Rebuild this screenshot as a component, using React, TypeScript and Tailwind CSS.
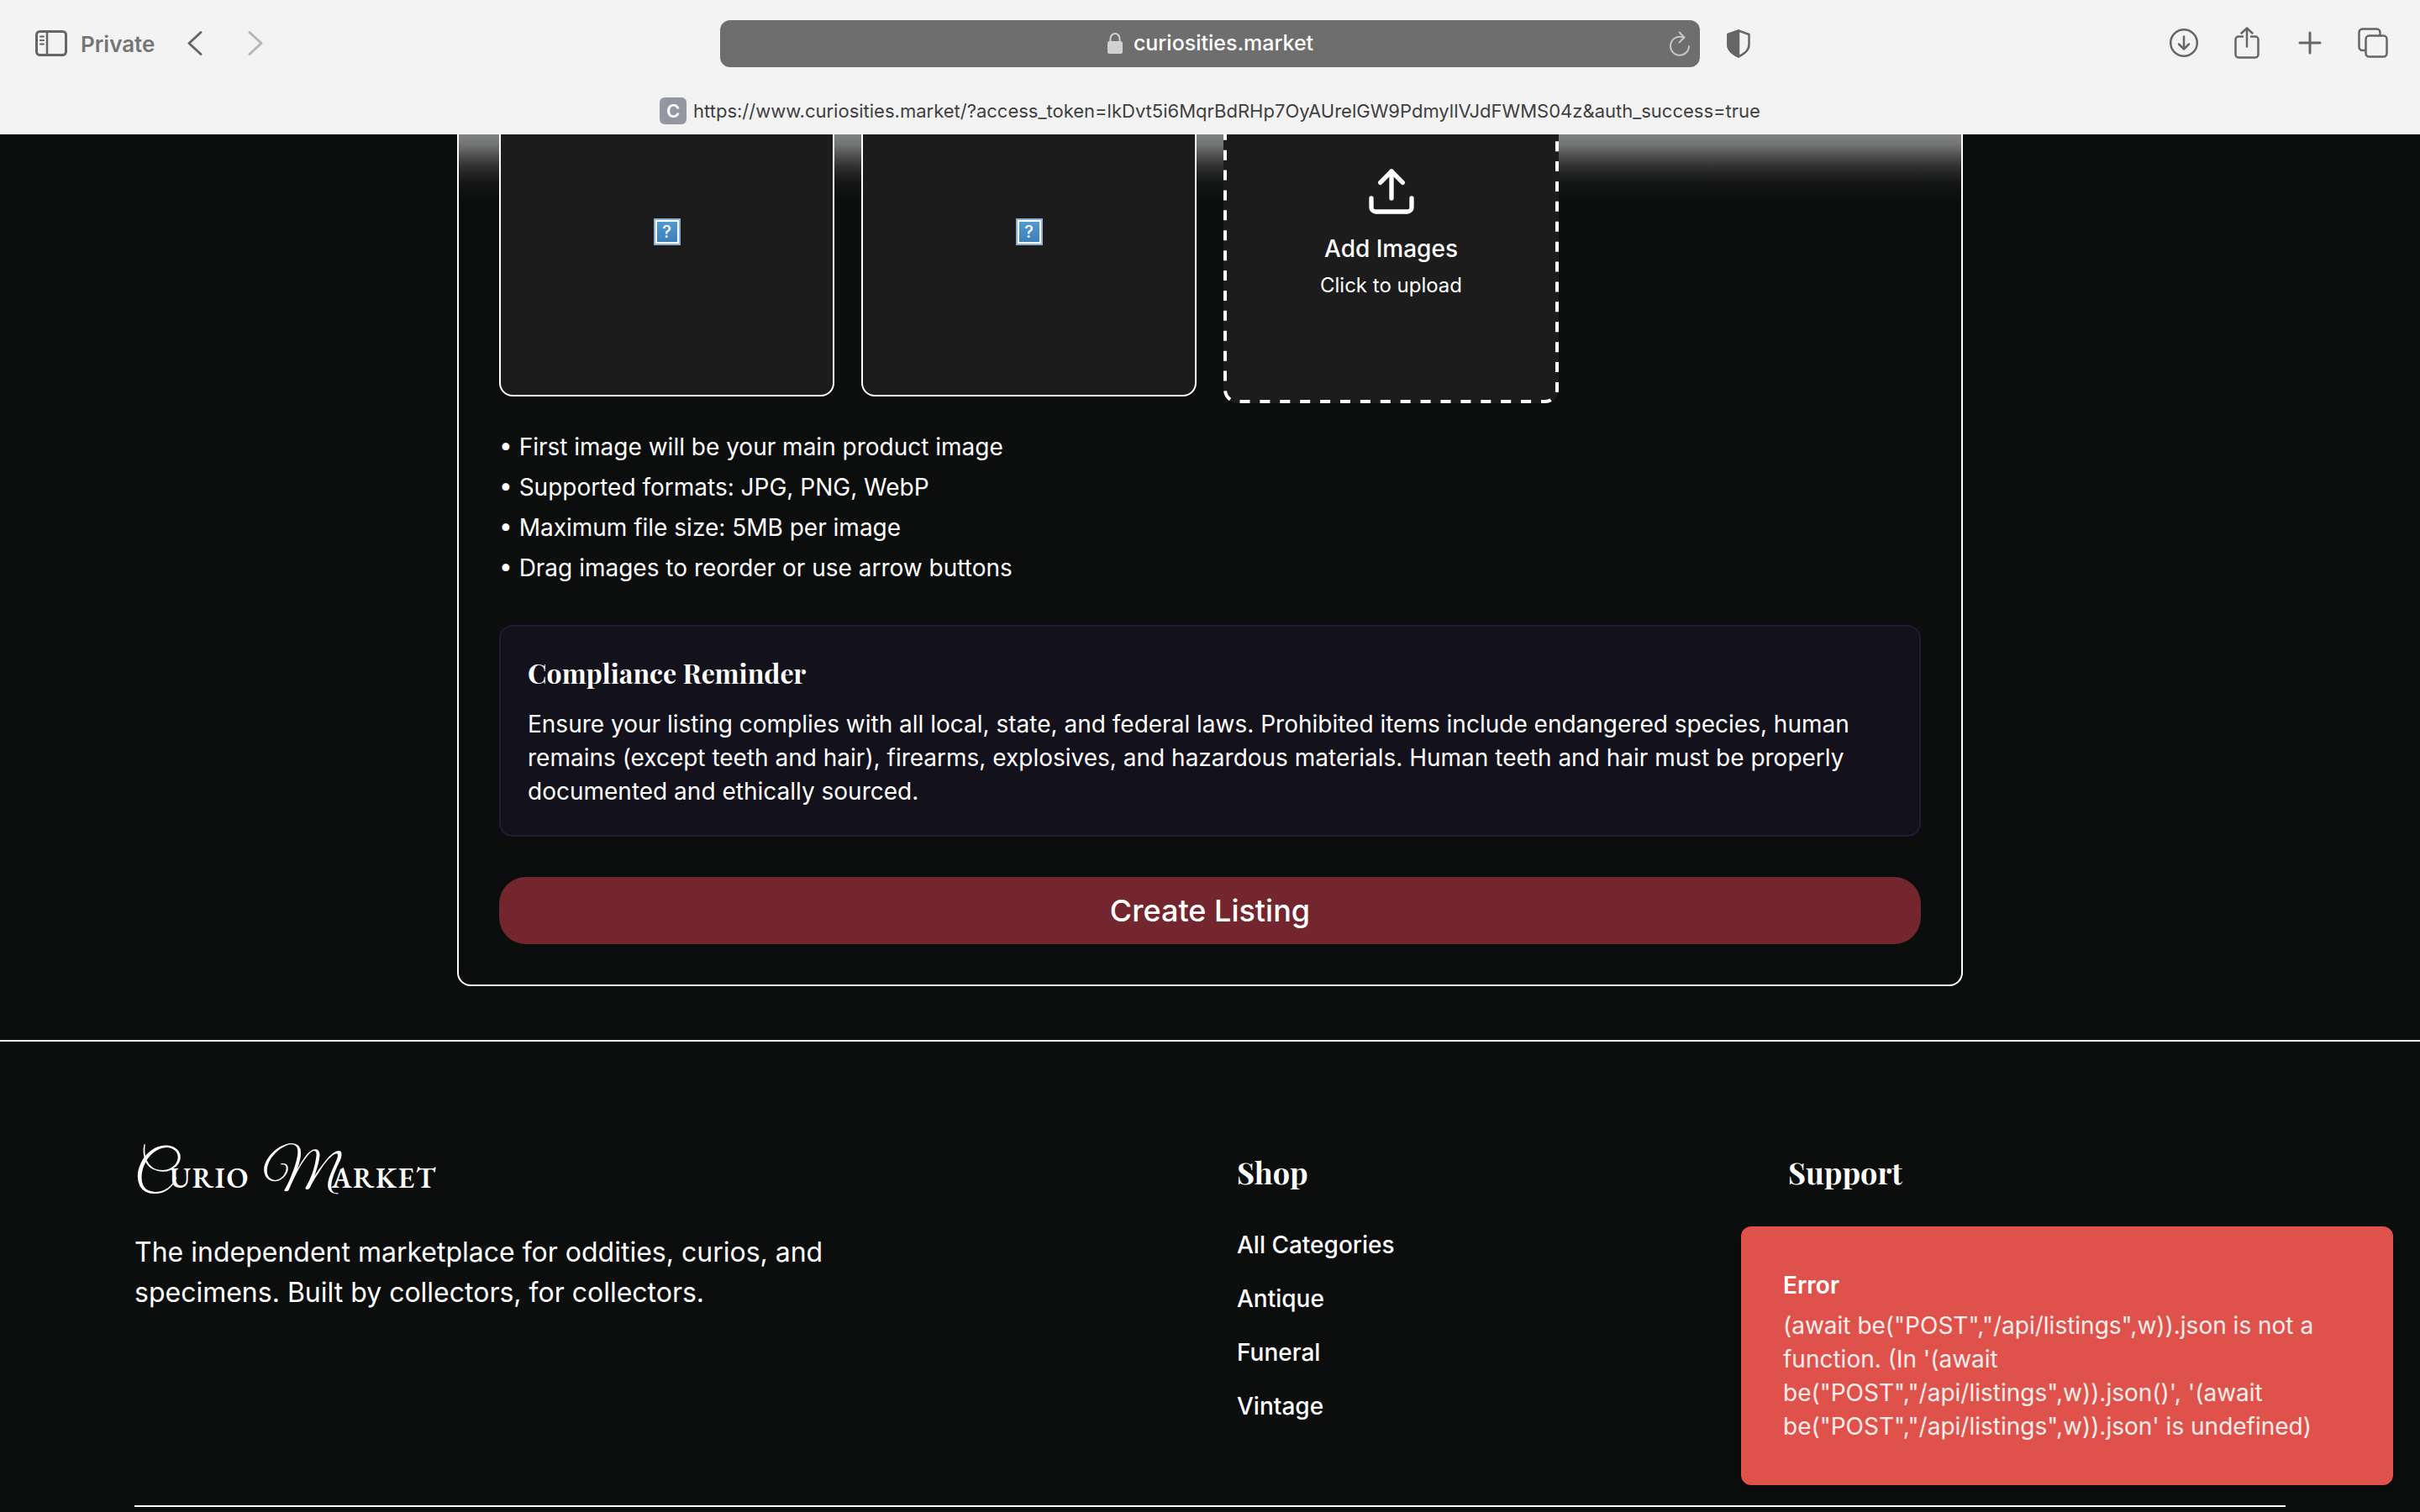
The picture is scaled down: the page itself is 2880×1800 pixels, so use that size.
import type { ReactNode } from "react";
import { Upload } from "lucide-react";

const SANS = "font-['Inter','Liberation_Sans',sans-serif]";
const SERIF = "font-['Playfair_Display','Liberation_Serif',serif]";

function ToolbarButton({ label, children }: { label: string; children: ReactNode }) {
  return (
    <button type="button" aria-label={label} className="flex h-10 w-10 items-center justify-center">
      {children}
    </button>
  );
}

function BrowserToolbar() {
  return (
    <header className={`relative z-10 h-40 shrink-0 bg-[#f3f3f3] text-[#666666] ${SANS}`}>
      <div className="flex h-[104px] items-center">
        <div className="flex flex-1 basis-0 items-center">
          <div className="ml-10 flex items-center">
            <ToolbarButton label="Show sidebar">
              <svg width="40" height="32" viewBox="0 0 40 32" fill="none" stroke="currentColor" strokeWidth="3" strokeLinecap="round">
                <rect x="3.5" y="1.5" width="35" height="28" rx="4" />
                <path d="M16 2v27" strokeWidth="2.5" />
                <path d="M8 7.5h4M8 12h4M8 16.5h4" strokeWidth="2" />
              </svg>
            </ToolbarButton>
            <span className="ml-4 text-[26px] font-semibold text-[#757575]">Private</span>
            <div className="ml-7 flex gap-8">
              <ToolbarButton label="Back">
                <svg width="20" height="32" viewBox="0 0 20 32" fill="none" stroke="currentColor" strokeWidth="3" strokeLinecap="round" strokeLinejoin="round">
                  <path d="M17 2.5L3 15.5L17 28.5" />
                </svg>
              </ToolbarButton>
              <ToolbarButton label="Forward">
                <svg className="text-[#b5b5b5]" width="20" height="32" viewBox="0 0 20 32" fill="none" stroke="currentColor" strokeWidth="3" strokeLinecap="round" strokeLinejoin="round">
                  <path d="M3 2.5L17 15.5L3 28.5" />
                </svg>
              </ToolbarButton>
            </div>
          </div>
        </div>

        <div className="flex h-14 w-[1166px] shrink items-center rounded-xl bg-[#6e6e6e] pr-1">
          <div className="w-11" />
          <div className="flex flex-1 items-center justify-center gap-3 text-white">
            <svg width="20" height="28" viewBox="0 0 20 28" fill="none">
              <rect x="1" y="11" width="18" height="15" rx="2.5" fill="#d2d2d2" />
              <path d="M4.5 12V8a5.5 6 0 0 1 11 0v4" stroke="#d2d2d2" strokeWidth="2" />
            </svg>
            <span className="text-[25px] font-medium">curiosities.market</span>
          </div>
          <ToolbarButton label="Reload">
            <svg width="28" height="32" viewBox="0 0 28 32" fill="none" stroke="#c6c6c6" strokeWidth="2" strokeLinecap="round" strokeLinejoin="round">
              <path d="M18 8.5A11 11 0 1 0 25 19" />
              <path d="M13.5 2.5l6 6L13.5 14.5" />
            </svg>
          </ToolbarButton>
        </div>

        <div className="flex flex-1 basis-0">
          <div className="ml-[26px] mr-9 flex flex-1 items-center justify-between">
            <ToolbarButton label="Privacy report">
              <svg width="30" height="36" viewBox="0 0 30 36" fill="none" stroke="currentColor" strokeWidth="2.5" strokeLinejoin="round">
                <path d="M15 2.5L27.5 7V19c0 7-5 10.5-12.5 14.5C7.5 29.5 2.5 26 2.5 19V7z" />
                <path d="M15 2.5V33.5C7.5 29.5 2.5 26 2.5 19V7z" fill="currentColor" />
              </svg>
            </ToolbarButton>
            <div className="flex items-center gap-[35px]">
              <ToolbarButton label="Downloads">
                <svg width="36" height="36" viewBox="0 0 36 36" fill="none" stroke="currentColor" strokeWidth="2.5" strokeLinecap="round" strokeLinejoin="round">
                  <circle cx="18" cy="17" r="15.8" />
                  <path d="M18 9.5V24M12 18.5l6 6 6-6" />
                </svg>
              </ToolbarButton>
              <ToolbarButton label="Share">
                <svg width="32" height="40" viewBox="0 0 32 40" fill="none" stroke="currentColor" strokeWidth="2.5" strokeLinecap="round" strokeLinejoin="round">
                  <path d="M11 11.5H6A3.5 3.5 0 0 0 2.5 15V33A3.5 3.5 0 0 0 6 36.5H26A3.5 3.5 0 0 0 29.5 33V15A3.5 3.5 0 0 0 26 11.5H21" />
                  <path d="M16 23.5V1.5M9.5 7.5L16 1.5l6.5 6" />
                </svg>
              </ToolbarButton>
              <ToolbarButton label="New tab">
                <svg width="28" height="30" viewBox="0 0 28 30" stroke="currentColor" strokeWidth="3" strokeLinecap="round">
                  <path d="M14 2v24M2 14h24" />
                </svg>
              </ToolbarButton>
              <ToolbarButton label="Tab overview">
                <svg width="38" height="38" viewBox="0 0 38 38" fill="none" stroke="currentColor" strokeWidth="2.5">
                  <rect x="10.5" y="9.5" width="25" height="25" rx="4" />
                  <path d="M10.5 27H6.5a4 4 0 0 1-4-4V5.5a4 4 0 0 1 4-4H23.5a4 4 0 0 1 4 4V9.5" />
                </svg>
              </ToolbarButton>
            </div>
          </div>
        </div>
      </div>

      <div className="flex h-14 items-center justify-center gap-2">
        <span className="flex h-8 w-8 items-center justify-center rounded-md bg-[#9496a1] text-[22px] font-semibold text-white">C</span>
        <span className="text-[22px] text-[#404040]">
          https://www.curiosities.market/?access_token=lkDvt5i6MqrBdRHp7OyAUrelGW9PdmyllVJdFWMS04z&amp;auth_success=true
        </span>
      </div>
    </header>
  );
}

function MissingImageTile() {
  return (
    <div className="flex h-[400px] items-center justify-center rounded-2xl border-2 border-white bg-[#1c1c1c] pt-2">
      <div className="flex h-8 w-8 items-center justify-center border-2 border-[#8fb0d6] bg-white p-[2px]">
        <div className="flex h-full w-full items-center justify-center bg-linear-to-b from-[#4f9bd0] to-[#3f7fba] text-[20px] font-medium leading-none text-white">
          ?
        </div>
      </div>
    </div>
  );
}

function DashedOutline() {
  return (
    <span className="pointer-events-none absolute inset-[2px]">
      <svg className="h-full w-full overflow-visible" fill="none">
        <rect width="100%" height="100%" rx="14" stroke="white" strokeWidth="4" strokeDasharray="12 11.9" strokeDashoffset="-14.9" />
      </svg>
    </span>
  );
}

const hints = [
  "First image will be your main product image",
  "Supported formats: JPG, PNG, WebP",
  "Maximum file size: 5MB per image",
  "Drag images to reorder or use arrow buttons",
];

function ListingForm() {
  return (
    <form className="mx-auto -mt-[138px] max-w-[1792px] rounded-2xl border-2 border-white bg-[#0c0e0d] bg-[linear-gradient(to_bottom,#7f8080_0,#7f8080_136px,#737574_148px,#4a4a4a_163px,#2a2b2a_177px,#151716_193px,#0c0e0d_214px,#0c0e0d_100%)] px-12 pb-12 pt-12">
      <div className="grid grid-cols-4 items-start gap-8">
        <MissingImageTile />
        <MissingImageTile />
        <button type="button" className="relative flex h-[408px] flex-col items-center justify-center rounded-2xl bg-[#1c1c1c]">
          <DashedOutline />
          <Upload size={64} strokeWidth={2} className="mb-4" />
          <span className="mb-2 text-[28px] font-medium leading-10">Add Images</span>
          <span className="text-2xl">Click to upload</span>
        </button>
      </div>

      <ul className="mt-8 space-y-2 text-[28px] leading-10">
        {hints.map((hint) => (
          <li key={hint}>• {hint}</li>
        ))}
      </ul>

      <section className="mt-12 rounded-2xl border-2 border-[#241937] bg-[#13111b] p-8">
        <h4 className={`mb-[18px] text-[32px] font-bold leading-[46px] ${SERIF}`}>Compliance Reminder</h4>
        <p className="text-[28px] leading-10">
          Ensure your listing complies with all local, state, and federal laws. Prohibited items include endangered
          species, human remains (except teeth and hair), firearms, explosives, and hazardous materials. Human teeth and
          hair must be properly documented and ethically sourced.
        </p>
      </section>

      <button type="submit" className="mt-12 flex h-20 w-full items-center justify-center rounded-[32px] bg-[#73262d] text-4xl font-medium">
        Create Listing
      </button>
    </form>
  );
}

const shopLinks = ["All Categories", "Antique", "Funeral", "Vintage"];

function Brand() {
  return (
    <a href="#home" className="flex items-baseline font-['EB_Garamond','Liberation_Serif',serif] text-[34px] font-semibold leading-none tracking-wider">
      <span className="font-['Great_Vibes','Liberation_Serif',cursive] text-[64px] font-normal tracking-normal">C</span>
      <span className="-ml-1">URIO</span>
      <span className="ml-4 font-['Great_Vibes','Liberation_Serif',cursive] text-[64px] font-normal tracking-normal">M</span>
      <span className="-ml-1">ARKET</span>
    </a>
  );
}

function Footer() {
  return (
    <footer className="mt-16 border-t-2 border-white px-40 pt-24">
      <div className="grid grid-cols-4 gap-16 border-b-2 border-white pb-[98px]">
        <div className="col-span-2">
          <div className="mb-6 flex h-[107px] items-center pt-5">
            <Brand />
          </div>
          <p className="max-w-4xl text-[32px] leading-[48px]">
            The independent marketplace for oddities, curios, and specimens. Built by collectors, for collectors.
          </p>
        </div>
        <nav aria-label="Shop" className="pt-8">
          <h3 className={`mb-10 text-4xl font-bold leading-[54px] ${SERIF}`}>Shop</h3>
          <ul className="space-y-6 text-[28px] font-medium leading-10">
            {shopLinks.map((link) => (
              <li key={link}>
                <a href={`#${link}`}>{link}</a>
              </li>
            ))}
          </ul>
        </nav>
        <nav aria-label="Support" className="pt-8">
          <h3 className={`text-4xl font-bold leading-[54px] ${SERIF}`}>Support</h3>
        </nav>
      </div>
    </footer>
  );
}

function ErrorToast() {
  return (
    <div role="alert" className="absolute bottom-8 right-8 w-[776px] rounded-xl border-2 border-[#df524b] bg-[#df524b] p-12 shadow-lg">
      <p className="mb-2 text-[28px] font-semibold leading-10">Error</p>
      <p className="text-[28px] leading-10 text-white/90">
        (await be("POST","/api/listings",w)).json is not a function. (In '(await be("POST","/api/listings",w)).json()',
        '(await be("POST","/api/listings",w)).json' is undefined)
      </p>
    </div>
  );
}

export default function App() {
  return (
    <div className={`relative flex h-screen flex-col overflow-hidden bg-[#0c0e0d] text-white ${SANS}`}>
      <BrowserToolbar />
      <main className="min-h-0 flex-1 overflow-hidden shadow-[inset_0_2px_0_#000000]">
        <ListingForm />
        <Footer />
      </main>
      <ErrorToast />
    </div>
  );
}
